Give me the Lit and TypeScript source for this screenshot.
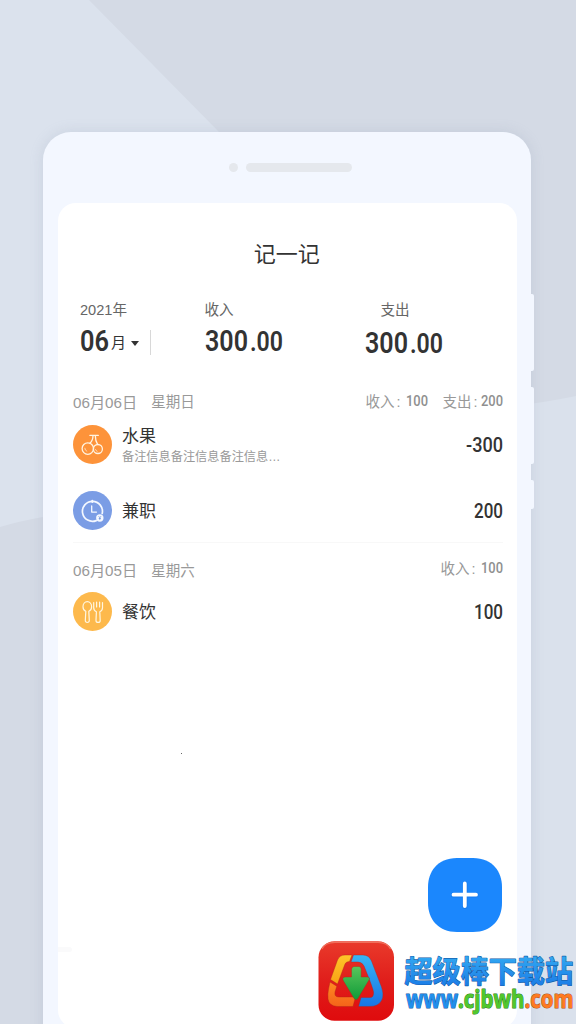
import { LitElement, html, svg, css } from "lit";
import { customElement, property } from "lit/decorators.js";

const cherry = svg`
  <g fill="none" stroke="#fff4e2" stroke-width="1.3" stroke-linecap="round">
    <circle cx="14.8" cy="23.6" r="5.7"/><circle cx="24.9" cy="24" r="4.5"/>
    <path d="M16.9 10.4h8.4M20 10.5c0 3.4-1 6-3.2 7.8M22.3 10.5c0 3.5.8 6.5 2.3 8.8"/>
    <path d="M11.8 23.2a3.2 3.2 0 0 0 2 3M22.5 24.5a2.4 2.4 0 0 0 1.6 1.8" stroke-width=".7"/>
  </g>`;
const clock = svg`
  <g fill="none" stroke="#f4f8ff" stroke-width="1.7" stroke-linecap="round" stroke-linejoin="round">
    <path d="M23.2 29.6A10 10 0 1 1 29.2 22.5"/><path d="M19.3 9.8v1.2" stroke-width="2"/>
    <path d="M18.7 15v6.1h4.8" stroke-width="1.3"/>
  </g>
  <circle cx="26.8" cy="27" r="3.7" fill="#f4f8ff"/>
  <path d="M25.7 25.300l1.100 1.300 1.100-1.300M26.800 26.600v2.200M25.800 27.500h2" stroke="#7496dd" stroke-width=".9" fill="none"/>`;
const cutlery = svg`
  <g fill="none" stroke="#fff6e0" stroke-width="1.2" stroke-linejoin="round" stroke-linecap="round">
    <path d="M12.8 19.4c-1.8-.7-2.8-2.5-2.8-4.6 0-3 1.9-5.1 4.3-5.1s4.300 2.100 4.300 5.100c0 2.100-1 3.900-2.800 4.600l.5 9.200c0 2.500-4 2.500-4 0z"/>
    <path d="M20.700 10.500v5.200c0 2 1 3.300 2.700 4l-.4 8.700c0 2.700 4.200 2.700 4.200 0l-.4-8.700c1.700-.7 2.700-2 2.700-4v-5.200M23.600 10v5M26.600 10v5"/>
  </g>`;

/** Condensed figure: digits squeezed to a fixed width. */
@customElement("din-figure")
class DinFigure extends LitElement {
  @property() value = "";
  @property({ type: Number }) size = 20;
  @property({ type: Number }) width = 28;
  static styles = css`
    :host { display: inline-block; }
    svg { display: block; overflow: visible; }
    text { font-family: Roboto, "Liberation Sans", sans-serif; font-weight: inherit; fill: currentColor; }
  `;
  render() {
    const h = Math.round(this.size * 0.72);
    return html`<svg width=${this.width} height=${h}>
      <text x="0" y=${h} font-size=${this.size} textLength=${this.width} lengthAdjust="spacingAndGlyphs">${this.value}</text>
    </svg>`;
  }
}

@customElement("ledger-entry")
class LedgerEntry extends LitElement {
  @property() name = "";
  @property() note = "";
  @property() amount = "";
  @property() color = "";
  @property({ type: Number }) width = 28;
  @property({ attribute: false }) icon: unknown;
  static styles = css`
    :host { display: flex; align-items: center; height: 40px; }
    .icon { width: 39px; height: 39px; flex: none; }
    .body { flex: 1; margin-left: 10px; padding-top: 3px; }
    .name { font-size: 17px; line-height: 22px; color: #333; }
    .note { font-size: 12.2px; line-height: 18px; color: #999; }
    din-figure { font-weight: 500; color: #333; padding-top: 2px; }
  `;
  render() {
    return html`
      <svg class="icon" viewBox="0 0 39 39"><circle cx="19.5" cy="19.5" r="19.5" fill=${this.color}/>${this.icon}</svg>
      <div class="body"><div class="name">${this.name}</div>${this.note ? html`<div class="note">${this.note}</div>` : ""}</div>
      <din-figure value=${this.amount} size="20" width=${this.width}></din-figure>`;
  }
}

@customElement("app-root")
class AppRoot extends LitElement {
  static styles = css`
    :host {
      display: block; position: relative; width: 576px; height: 1024px; overflow: hidden;
      background: #d4dae5; color: #333;
      font-family: "Liberation Sans", "Noto Sans CJK SC", sans-serif;
    }
    .backdrop { position: absolute; inset: 0; }
    .phone {
      position: relative; box-sizing: border-box; width: 488px; height: 940px; margin: 0 0 0 43px;
      padding: 31px 14.5px 0; border-radius: 28px; background: #f3f7ff;
      box-shadow: 0 0 14px rgba(130, 145, 170, .2);
    }
    .stage { padding-top: 131.5px; }
    .speaker { display: flex; justify-content: center; align-items: center; gap: 8px; height: 10px; padding-left: 7px; }
    .lens { width: 9px; height: 9px; border-radius: 50%; background: #e5e8ed; }
    .slot { width: 106px; height: 9px; border-radius: 5px; background: #e5e8ed; }
    .keys { position: absolute; left: 487px; top: 162px; display: grid; gap: 16px; }
    .key { width: 4px; border-radius: 0 2px 2px 0; background: #f3f7ff; }
    .long { height: 77px; } .short { height: 29px; }
    .screen {
      box-sizing: border-box; height: 825px; margin-top: 30px; padding: 37px 14px 0 15.5px;
      border-radius: 18px; background: #fff;
    }
    h1 { margin: 0; padding-right: 2px; font-size: 22px; font-weight: 400; line-height: 30px; text-align: center; }
    .summary { display: grid; grid-template-columns: 125.5px 160px 1fr; margin-top: 30px; padding-left: 6px; height: 91px; }
    .year { padding-left: 1px; }
    .label { font-size: 14.6px; line-height: 20px; color: #666; }
    .figures { display: flex; align-items: flex-end; height: 31px; }
    .figures din-figure { font-weight: 600; }
    .cents { margin-left: 2px; }
    .month { font-size: 15px; line-height: 15px; margin: 0 0 1px 2px; }
    .caret { margin: 0 0 5px 5px; border: 4px solid transparent; border-top: 5px solid #333; border-bottom: 0; }
    .rule { width: 1px; height: 25px; margin: 0 0 -4px 11px; background: #d8d8d8; }
    .out .label { padding-left: 16px; }
    .out .figures { height: 33px; padding-left: .5px; }
    .day { display: flex; justify-content: space-between; align-items: center; height: 20px; font-size: 14.5px; color: #999; }
    .date { display: flex; align-items: center; gap: 14px; }
    .digits { font-size: 15.2px; }
    .totals { display: flex; align-items: center; gap: 15px; }
    .total { display: flex; align-items: center; justify-content: space-between; }
    .income { width: 62px; }
    .expense { width: 60px; }
    .total din-figure { font-weight: 500; color: #8f8f8f; }
    .colon { display: inline-block; width: 4px; margin-left: 2px; }
    .line { height: 1px; margin: 12px 0 16px; background: #f8f8f8; }
    .raise { margin-top: -3px; }
    .first { margin: 13.5px 0 26px; }
    .last { margin-top: 12px; }
    .speck { position: absolute; left: 181px; top: 753px; width: 1px; height: 1px; background: #666; }
    .smudge { position: absolute; left: 58px; top: 947px; width: 14px; height: 5px; border-radius: 0 4px 4px 0; background: #fafafb; }
    .add { position: absolute; left: 428px; top: 858px; width: 74px; height: 74px; }
    .mark { position: absolute; left: 310px; top: 930px; width: 266px; height: 94px; }
    .cn { font: 700 30px "Noto Sans CJK SC", sans-serif; }
    .url { font: 700 24.5px "Open Sans", sans-serif; }
  `;

  total(label: string, value: string, kind: string) {
    return html`<div class="total ${kind}"><span>${label}<span class="colon">:</span></span><din-figure value=${value} size="15" width="22"></din-figure></div>`;
  }

  render() {
    return html`
      <svg class="backdrop" viewBox="0 0 576 1024">
        <path d="M0 0H89L218 131L300 250V490Q120 494 43 517Q20 521 0 527Z" fill="#dbe2ed"/>
        <path d="M400 415Q510 410 576 396V1024H400Z" fill="#dae1ec"/>
      </svg>
      <div class="stage">
        <div class="phone">
          <div class="keys"><div class="key long"></div><div class="key long"></div><div class="key short"></div></div>
          <div class="speaker"><div class="lens"></div><div class="slot"></div></div>
          <div class="screen">
            <h1>记一记</h1>
            <div class="summary">
              <div class="year">
                <div class="label">2021年</div>
                <div class="figures"><din-figure value="06" size="30" width="29"></din-figure><span class="month">月</span><i class="caret"></i><i class="rule"></i></div>
              </div>
              <div>
                <div class="label">收入</div>
                <div class="figures"><din-figure value="300" size="30" width="43"></din-figure><din-figure class="cents" value=".00" size="27" width="33"></din-figure></div>
              </div>
              <div class="out">
                <div class="label">支出</div>
                <div class="figures"><din-figure value="300" size="30" width="43"></din-figure><din-figure class="cents" value=".00" size="27" width="33"></din-figure></div>
              </div>
            </div>
            <div class="day"><div class="date"><span class="digits">06月06日</span><span>星期日</span></div>
              <div class="totals">${this.total("收入", "100", "income")}${this.total("支出", "200", "expense")}</div></div>
            <ledger-entry class="first" name="水果" note="备注信息备注信息备注信息…" amount="-300" width="37" color="#fd933a" .icon=${cherry}></ledger-entry>
            <ledger-entry name="兼职" amount="200" width="29" color="#7b9de5" .icon=${clock}></ledger-entry>
            <div class="line"></div>
            <div class="day"><div class="date"><span class="digits">06月05日</span><span>星期六</span></div>
              <div class="totals raise">${this.total("收入", "100", "income")}</div></div>
            <ledger-entry class="last" name="餐饮" amount="100" width="29" color="#fdb94c" .icon=${cutlery}></ledger-entry>
          </div>
        </div>
      </div>
      <i class="speck"></i>
      <i class="smudge"></i>
      <svg class="add" viewBox="0 0 74 74">
        <path d="M29 0H45C65 0 74 14 74 29V45C74 61 64 74 45 74H29C10 74 0 61 0 45V29C0 14 9 0 29 0Z" fill="#1b87fd"/>
        <path d="M37 26V48.5M25.500 37H48" stroke="#126bd8" stroke-width="5" stroke-linecap="round" opacity=".4"/>
        <path d="M36.800 25.500V48M25.500 36.700H48" stroke="#fff" stroke-width="3.800" stroke-linecap="round"/>
      </svg>
      <svg class="mark" viewBox="0 0 266 94">
        <defs>
          <linearGradient id="red" x2="0" y2="1"><stop stop-color="#e93a2b"/><stop offset=".5" stop-color="#e01e1b"/><stop offset="1" stop-color="#df0b0d"/></linearGradient>
          <linearGradient id="blue" x2="0" y2="1"><stop stop-color="#38b5f4"/><stop offset="1" stop-color="#1875e5"/></linearGradient>
          <linearGradient id="gold" x2="0" y2="1"><stop stop-color="#ffc329"/><stop offset="1" stop-color="#f8a315"/></linearGradient>
          <linearGradient id="orange" x2="0" y2="1"><stop stop-color="#ff8a22"/><stop offset="1" stop-color="#f4631a"/></linearGradient>
          <linearGradient id="green" x2="0" y2="1"><stop stop-color="#59c55b"/><stop offset="1" stop-color="#109b39"/></linearGradient>
        </defs>
        <rect x="8.500" y="11.300" width="75.500" height="79.500" rx="16" fill="url(#red)"/>
        <path d="M12 19Q15 12.300 25 12.300H68Q77 12.300 80.500 19" fill="none" stroke="#f0705c" stroke-width="1.200"/>
        <g stroke="#ad2317" stroke-width=".4">
          <path d="M38.500 25H35Q29.500 25 27.500 30L20.500 49.500L27.500 54L35 34Q36 31.500 39.500 31.500L42 25Z" fill="url(#gold)"/>
          <path d="M20 52L26.800 56.200L25 62Q24 67 29 67H45.500L43 76.500H27Q19 76 18 69Q17.500 64 18.500 59Z" fill="url(#orange)"/>
          <path d="M43.500 25H53Q59 25 61.500 31L71.500 57Q76 70 67 75Q64 76.500 59 76.500H48.500L51 67.500H60Q64 67.500 63.500 62Q63 58 54 36Q52 32 48 32H41Z" fill="url(#blue)"/>
          <path d="M41.500 39Q42 36.500 44 36.500H49Q51 36.500 51.200 39V47H57.500Q61 47.500 59 50L48 68.500Q46 71 44 68.500L33.500 51Q31.500 47.500 35 47H41.500Z" fill="url(#green)"/>
        </g>
        <g stroke-linejoin="round" paint-order="stroke">
          <text class="cn" x="94.500" y="52" textLength="168.500" lengthAdjust="spacingAndGlyphs" fill="url(#blue)" stroke="#155da7" stroke-width="1.200">超级棒下载站</text>
          <g class="url" stroke-width="1.100">
            <text x="96" y="78" textLength="52" lengthAdjust="spacingAndGlyphs" fill="#208fed" stroke="#165aa5">www</text>
            <text x="148" y="78" textLength="66.500" lengthAdjust="spacingAndGlyphs" fill="#50c82d" stroke="#2b7a20">.cjbwh</text>
            <text x="214.500" y="78" textLength="49" lengthAdjust="spacingAndGlyphs" fill="#ff7a20" stroke="#a9521c">.com</text>
          </g>
        </g>
      </svg>`;
  }
}
